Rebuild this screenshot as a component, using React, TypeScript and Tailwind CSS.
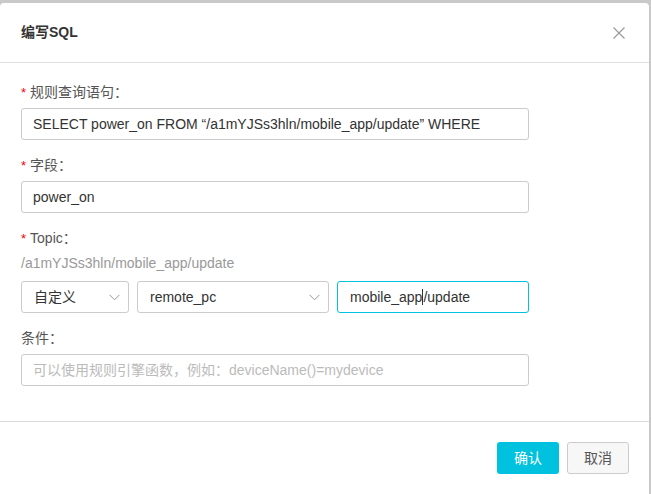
import React from 'react';

const font = { fontFamily: '"Liberation Sans", "Noto Sans CJK SC", sans-serif' };

const Label: React.FC<{ text: string; required?: boolean }> = ({ text, required }) => (
  <div className="flex items-center h-[20px] text-[14px] text-[#555]">
    {required && <span className="text-[#f00] mr-[4px] text-[13px] leading-none">*</span>}
    <span>{text}</span>
  </div>
);

const Chevron = () => (
  <svg width="11" height="7" viewBox="0 0 11 7" fill="none" stroke="#999" strokeWidth="1">
    <path d="M0.5 0.8 L5.5 5.8 L10.5 0.8" />
  </svg>
);

const App: React.FC = () => {
  return (
    <div className="w-[651px] h-[494px] bg-[#c9c9c9] overflow-hidden" style={font}>
      <div className="mt-[3px] w-[649px] h-[491px] bg-white rounded-t-[4px] flex flex-col">
        {/* Header */}
        <div className="h-[60px] flex items-center justify-between pl-[21px] pr-[24px] border-b border-[#e1e1e1]">
          <h1 className="text-[14px] font-bold text-[#333]">编写SQL</h1>
          <svg width="12" height="12" viewBox="0 0 12 12" stroke="#999" strokeWidth="1.1">
            <path d="M0.5 0.5 L11.5 11.5 M11.5 0.5 L0.5 11.5" />
          </svg>
        </div>

        {/* Body */}
        <div className="h-[359px] border-b border-[#dcdcdc] pl-[21px] pt-[19px]">
          <Label text="规则查询语句：" required />
          <div className="mt-[6px] w-[508px] h-[32px] border border-[#ccc] rounded-[3px] flex items-center px-[11px] text-[14px] text-[#333]">
            SELECT power_on FROM “/a1mYJSs3hln/mobile_app/update” WHERE
          </div>

          <div className="mt-[15px]">
            <Label text="字段：" required />
          </div>
          <div className="mt-[6px] w-[508px] h-[32px] border border-[#ccc] rounded-[3px] flex items-center px-[11px] text-[14px] text-[#333]">
            power_on
          </div>

          <div className="mt-[15px]">
            <Label text="Topic：" required />
          </div>
          <div className="mt-[5px] h-[20px] flex items-center text-[14px] text-[#999]">
            /a1mYJSs3hln/mobile_app/update
          </div>

          <div className="mt-[8px] flex gap-[8px]">
            <div className="w-[108px] h-[32px] border border-[#ccc] rounded-[3px] flex items-center justify-between pl-[12px] pr-[8px] text-[14px] text-[#333]">
              <span>自定义</span>
              <Chevron />
            </div>
            <div className="w-[192px] h-[32px] border border-[#ccc] rounded-[3px] flex items-center justify-between pl-[12px] pr-[8px] text-[14px] text-[#333]">
              <span>remote_pc</span>
              <Chevron />
            </div>
            <div className="w-[192px] h-[32px] border border-[#00c1de] rounded-[3px] flex items-center px-[12px] text-[14px] text-[#333]">
              <span>mobile_app</span>
              <span className="w-px h-[16px] bg-[#333]" />
              <span>/update</span>
            </div>
          </div>

          <div className="mt-[15px] h-[20px] flex items-center text-[14px] text-[#555]">条件：</div>
          <div className="mt-[6px] w-[508px] h-[32px] border border-[#ccc] rounded-[3px] flex items-center px-[11px] text-[14px] text-[#bbb]">
            可以使用规则引擎函数，例如：deviceName()=mydevice
          </div>
        </div>

        {/* Footer */}
        <div className="flex justify-end gap-[8px] pr-[20px] pt-[20px]">
          <button className="w-[62px] h-[32px] rounded-[3px] bg-[#00c1de] text-white text-[14px]">确认</button>
          <button className="w-[62px] h-[32px] rounded-[3px] bg-[#f7f7f7] border border-[#ccc] text-[#555] text-[14px]">取消</button>
        </div>
      </div>
    </div>
  );
};

export default App;
